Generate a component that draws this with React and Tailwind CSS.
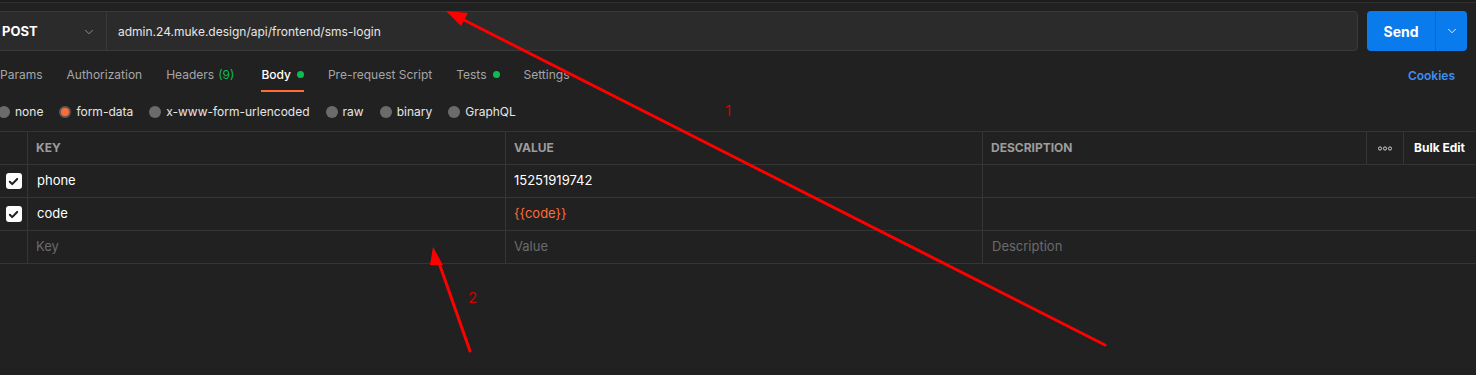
import { ChevronDown } from 'lucide-react';

const FONT = { fontFamily: "Inter, 'Noto Sans', sans-serif" };

const TABS = [
  { label: 'Params' },
  { label: 'Authorization' },
  { label: 'Headers', count: '(9)' },
  { label: 'Body', dot: true, active: true },
  { label: 'Pre-request Script' },
  { label: 'Tests', dot: true },
  { label: 'Settings' },
];

const BODY_TYPES = [
  { label: 'none' },
  { label: 'form-data', checked: true },
  { label: 'x-www-form-urlencoded' },
  { label: 'raw' },
  { label: 'binary' },
  { label: 'GraphQL' },
];

const ROWS = [
  { key: 'phone', value: '15251919742' },
  { key: 'code', value: '{{code}}', variable: true },
];

function Checkbox() {
  return (
    <span className="flex h-4 w-4 items-center justify-center rounded-[3px] bg-white">
      <svg width="11" height="11" viewBox="0 0 12 12" fill="none">
        <path d="M2 6.3l2.6 2.6L10 3.2" stroke="#1f1f1f" strokeWidth="2.2" strokeLinecap="round" strokeLinejoin="round" />
      </svg>
    </span>
  );
}

function App() {
  return (
    <div className="relative h-[375px] w-[1476px] overflow-hidden bg-[#212121] text-[#e6e6e6]" style={FONT}>
      {/* window strip */}
      <div className="h-[3px] border-b border-[#303030] bg-[#1c1c1c]" />

      {/* url bar */}
      <div className="mt-[8px] flex h-[40px] items-stretch gap-[9px] pr-[9px]">
        <div className="-ml-px flex flex-1 rounded-r-[4px] border border-[#3a3a3a] bg-[#2b2b2b]">
          <div className="flex w-[107px] items-center justify-between border-r border-[#3a3a3a] pl-[2px] pr-[10px] pt-px">
            <span className="text-[13px] font-bold text-white">POST</span>
            <ChevronDown size={14} strokeWidth={1.5} className="text-[#9a9a9a]" />
          </div>
          <div className="flex items-center pl-[11px] pt-px text-[12px] text-[#e6e6e6]">
            admin.24.muke.design/api/frontend/sms-login
          </div>
        </div>
        <div className="flex w-[100px] overflow-hidden rounded-[4px] bg-[#097bed]">
          <button className="flex w-[68px] items-center justify-center text-[14px] font-bold text-white">Send</button>
          <span className="flex flex-1 items-center justify-center border-l border-[#0a6acb]">
            <ChevronDown size={14} strokeWidth={1.5} className="text-white" />
          </span>
        </div>
      </div>

      {/* request tabs */}
      <div className="mt-[10px] flex h-[31px] items-stretch pr-[21px]">
        <div className="flex flex-1 gap-[24px]">
          {TABS.map((t) => (
            <div
              key={t.label}
              className={
                'flex items-center gap-[6px] border-b-2 pb-[2px] text-[12px] ' +
                (t.active ? 'ml-[3px] border-[#ff6c37] font-medium text-white' : 'border-transparent text-[#a6a6a6]')
              }
            >
              <span>
                {t.label}
                {t.count && <span className="ml-[4px] text-[#0cbb52]">{t.count}</span>}
              </span>
              {t.dot && <span className="h-[7px] w-[7px] rounded-full bg-[#0cbb52]" />}
            </div>
          ))}
        </div>
        <div className="flex items-center pb-[2px] text-[12px] font-semibold text-[#3f8ff0]">Cookies</div>
      </div>

      {/* body type */}
      <div className="-ml-[2px] mt-[8px] flex h-[24px] items-center gap-[16px]">
        {BODY_TYPES.map((b) => (
          <label key={b.label} className="flex items-center gap-[5px] text-[12px] text-[#e6e6e6]">
            {b.checked ? (
              <span className="h-[12px] w-[12px] rounded-full border-2 border-[#5c5c5c] bg-[#ff6c37]" />
            ) : (
              <span className="h-[12px] w-[12px] rounded-full bg-[#6b6b6b]" />
            )}
            {b.label}
          </label>
        ))}
      </div>

      {/* params table */}
      <div className="mt-[7px] grid grid-cols-[27px_478px_477px_384px_37px_73px] border-t border-[#353535] text-[12px]">
        <div className="h-[33px] border-b border-[#353535]" />
        <div className="flex h-[33px] items-center border-b border-l border-[#353535] pl-[8px] font-bold text-[#9c9c9c]">KEY</div>
        <div className="flex h-[33px] items-center border-b border-l border-[#353535] pl-[8px] font-bold text-[#9c9c9c]">VALUE</div>
        <div className="flex h-[33px] items-center border-b border-l border-[#353535] pl-[8px] font-bold text-[#9c9c9c]">DESCRIPTION</div>
        <div className="flex h-[33px] items-center justify-center border-b border-l border-[#353535]">
          <svg width="14" height="5" viewBox="0 0 14 5" fill="none" stroke="#cfcfcf" strokeWidth="1">
            <circle cx="2" cy="2.5" r="1.6" />
            <circle cx="7" cy="2.5" r="1.6" />
            <circle cx="12" cy="2.5" r="1.6" />
          </svg>
        </div>
        <div className="flex h-[33px] items-center border-b border-l border-[#353535] pl-[10px] font-bold text-white">Bulk Edit</div>

        {ROWS.map((r) => (
          <div key={r.key} className="contents">
            <div className="flex h-[33px] items-center justify-center border-b border-[#353535]">
              <Checkbox />
            </div>
            <div className="flex h-[33px] items-center border-b border-l border-[#353535] pl-[9px] text-[13px] text-white">{r.key}</div>
            <div
              className={
                'flex h-[33px] items-center border-b border-l border-[#353535] pl-[8px] text-[13px] ' +
                (r.variable ? 'text-[#ff6c37]' : 'text-white')
              }
            >
              {r.value}
            </div>
            <div className="col-span-3 h-[33px] border-b border-l border-[#353535]" />
          </div>
        ))}

        <div className="h-[33px] border-b border-[#353535]" />
        <div className="flex h-[33px] items-center border-b border-l border-[#353535] pl-[8px] text-[13px] text-[#6b6b6b]">Key</div>
        <div className="flex h-[33px] items-center border-b border-l border-[#353535] pl-[8px] text-[13px] text-[#6b6b6b]">Value</div>
        <div className="col-span-3 flex h-[33px] items-center border-b border-l border-[#353535] pl-[9px] text-[13px] text-[#6b6b6b]">Description</div>
      </div>

      {/* annotation overlay */}
      <svg className="pointer-events-none absolute inset-0" width="1476" height="375" viewBox="0 0 1476 375">
        <line x1="1105" y1="345" x2="460" y2="18" stroke="#ff0000" strokeWidth="3" strokeLinecap="round" />
        <polygon points="446,11 468,13 461,26" fill="#ff0000" />
        <line x1="470" y1="351" x2="438" y2="260" stroke="#ff0000" strokeWidth="3" strokeLinecap="round" />
        <polygon points="433,247 443,265 430,265" fill="#ff0000" />
      </svg>
      <span className="absolute left-[725px] top-[100px] text-[15px] text-[#d20000]">1</span>
      <span className="absolute left-[468px] top-[287px] text-[15px] text-[#d20000]">2</span>
    </div>
  );
}

export default App;
